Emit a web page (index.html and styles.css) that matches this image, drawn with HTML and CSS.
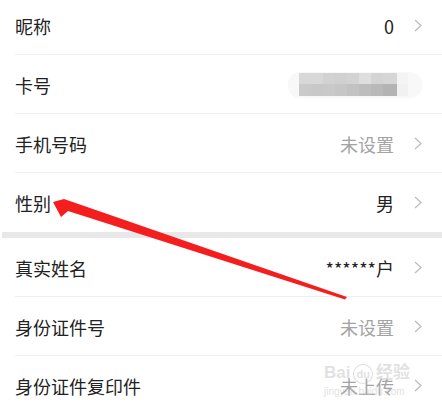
FILE: index.html
```html
<!DOCTYPE html>
<html lang="zh-CN">
<head>
    <meta charset="UTF-8" />
    <title>个人资料</title>
    <link rel="stylesheet" href="styles.css">
</head>
<body>
<div class="page">
    <div class="list first">
        <div class="row">
            <span class="label">昵称</span>
            <span class="value">0</span>
            <svg class="chevron" viewBox="0 0 8 13"><polyline points="1,1 7,6.5 1,12" /></svg>
        </div>
        <div class="row">
            <span class="label">卡号</span>
            <div class="mosaic">
                <div class="mosaic-top"></div>
                <div class="mosaic-bottom"></div>
            </div>
            <svg class="chevron faint" viewBox="0 0 8 13"><polyline points="1,1 7,6.5 1,12" /></svg>
        </div>
        <div class="row">
            <span class="label">手机号码</span>
            <span class="value muted">未设置</span>
            <svg class="chevron" viewBox="0 0 8 13"><polyline points="1,1 7,6.5 1,12" /></svg>
        </div>
        <div class="row">
            <span class="label">性别</span>
            <span class="value">男</span>
            <svg class="chevron" viewBox="0 0 8 13"><polyline points="1,1 7,6.5 1,12" /></svg>
        </div>
    </div>

    <div class="band"></div>

    <div class="list">
        <div class="row">
            <span class="label">真实姓名</span>
            <span class="value">******户</span>
            <svg class="chevron" viewBox="0 0 8 13"><polyline points="1,1 7,6.5 1,12" /></svg>
        </div>
        <div class="row">
            <span class="label">身份证件号</span>
            <span class="value muted">未设置</span>
            <svg class="chevron" viewBox="0 0 8 13"><polyline points="1,1 7,6.5 1,12" /></svg>
        </div>
        <div class="row">
            <span class="label">身份证件复印件</span>
            <span class="value muted">未上传</span>
            <svg class="chevron" viewBox="0 0 8 13"><polyline points="1,1 7,6.5 1,12" /></svg>
        </div>
    </div>

    <!-- annotation arrow drawn over the screenshot -->
    <svg class="arrow" viewBox="0 0 442 404">
        <polygon points="53,202 64,199 347,297 345,299.5 68,211 61,217" />
    </svg>

    <div class="watermark">
        <div class="wm-brand">Bai<span class="wm-du">du</span>经验</div>
        <div class="wm-url">jingyan.baidu.com</div>
    </div>
</div>
</body>
</html>
```

FILE: styles.css
```css
body {
    margin: 0;
    background-color: #fff;
    font-family: "Noto Sans CJK SC", "Noto Sans", sans-serif;
    color: #222;
}
.page {
    position: relative;
    width: 442px;
    height: 404px;
    overflow: hidden;
}
.list {
    margin-left: 2px;
}
.list.first {
    margin-top: -4px;
}
.row {
    display: flex;
    align-items: center;
    height: 57px;
    padding-top: 1px;
    margin-left: 13px;
    padding-right: 20px;
    border-bottom: 1px solid #efefef;
}
.list .row:last-child {
    border-bottom: none;
}
.label {
    flex: 1;
    font-size: 18px;
}
.value {
    font-size: 18px;
    margin-right: 20px;
}
.value.muted {
    color: #a3a3a3;
}
.chevron {
    width: 8px;
    height: 13px;
    fill: none;
    stroke: #bdbdbd;
    stroke-width: 1.3;
}
.chevron.faint {
    stroke: #d6d6d6;
}
.mosaic {
    position: relative;
    left: -4px;
    width: 134px;
    height: 26px;
    margin-right: -12px;
    padding: 0 14px 0 11px;
    box-sizing: border-box;
    border-radius: 12px;
    background-color: #f8f8f8;
    display: flex;
    flex-direction: column;
    justify-content: center;
}
.mosaic-top {
    height: 11px;
    background: linear-gradient(to right,
        #d8d8d8 0 24px, #d2d2d2 24px 36px, #d0d0d0 36px 48px, #d3d3d3 48px 60px,
        #dedede 60px 72px, #d4d4d4 72px 84px, #d6d6d6 84px 98px, #f4f4f4 98px);
}
.mosaic-bottom {
    height: 12px;
    background: linear-gradient(to right,
        #cacaca 0 12px, #c8c8c8 12px 24px, #c9c9c9 24px 36px, #c6c6c6 36px 48px,
        #c2c2c2 48px 60px, #bdbdbd 60px 72px, #b9b9b9 72px 84px, #b3b3b3 84px 98px, #f1f1f1 98px);
}
.band {
    height: 6px;
    margin-top: 1px;
    margin-left: 2px;
    background-color: #e8e8e8;
}
.arrow {
    position: absolute;
    left: 0;
    top: 0;
    width: 442px;
    height: 404px;
    fill: #f41e1e;
}
.watermark {
    position: absolute;
    left: 324px;
    top: 364px;
    color: rgba(200, 200, 200, 0.55);
    font-family: "Liberation Sans", "Noto Sans CJK SC", sans-serif;
    pointer-events: none;
}
.wm-brand {
    font-size: 17px;
    font-weight: bold;
    line-height: 18px;
}
.wm-du {
    display: inline-block;
    font-size: 11px;
    border: 1px solid rgba(200, 200, 200, 0.6);
    border-radius: 50%;
    padding: 0 2px;
    margin: 0 3px;
}
.wm-url {
    font-size: 10px;
    margin-top: 2px;
}
```
